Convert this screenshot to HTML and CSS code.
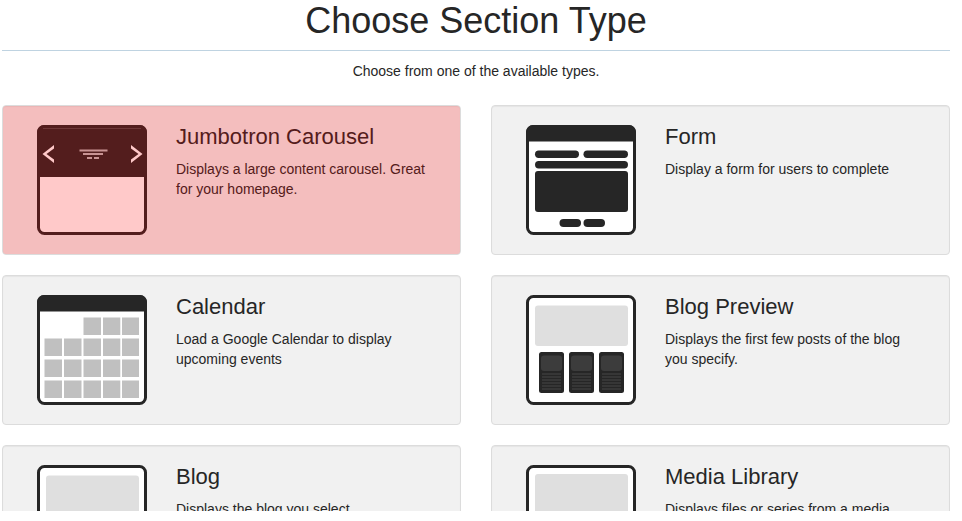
FILE: index.html
```html
<!DOCTYPE html>
<html lang="en">
<head>
  <meta charset="utf-8">
  <meta name="viewport" content="width=device-width, initial-scale=1.0">
  <title>Choose Section Type</title>
  <link rel="stylesheet" href="styles.css">
</head>
<body>
  <main class="chooser">
    <h1 class="title">Choose Section Type</h1>
    <p class="intro">Choose from one of the available types.</p>

    <div class="types">
      <a class="well selected" href="#jumbotron">
        <svg class="icon" viewBox="0 0 110 110" aria-hidden="true">
          <rect x="1.5" y="1.5" width="107" height="107" rx="6" fill="#fff" stroke="#262626" stroke-width="3"/>
          <path d="M0 52V7a7 7 0 0 1 7-7h96a7 7 0 0 1 7 7v45z" fill="#262626"/>
          <path d="M6 3.5h98" stroke="#484848"/>
          <path d="M17 20v3.500L9.500 29l7.500 5.500V38L5.500 29zM94 20v3.500l7.500 5.500-7.500 5.500V38l11.500-9z" fill="#fff"/>
          <path d="M42.5 25.500h28M46 29h20M50 33h5M57 33h5" stroke="#bbb" stroke-width="2"/>
        </svg>
        <div class="info">
          <h2>Jumbotron Carousel</h2>
          <p>Displays a large content carousel. Great for your homepage.</p>
        </div>
      </a>

      <a class="well" href="#form">
        <svg class="icon" viewBox="0 0 110 110" aria-hidden="true">
          <rect x="1.5" y="1.5" width="107" height="107" rx="6" fill="#fff" stroke="#262626" stroke-width="3"/>
          <g fill="#262626">
            <path d="M0 16.5V7a7 7 0 0 1 7-7h96a7 7 0 0 1 7 7v9.5z"/>
            <rect x="9" y="25.5" width="44" height="7.5" rx="3.7"/>
            <rect x="57.5" y="25.5" width="44.5" height="7.5" rx="3.7"/>
            <rect x="9" y="36" width="93" height="7.5" rx="3.7"/>
            <rect x="9" y="46" width="93" height="41" rx="3"/>
            <rect x="33.5" y="94" width="21.5" height="8" rx="4"/>
            <rect x="57.5" y="94" width="21.5" height="8" rx="4"/>
          </g>
        </svg>
        <div class="info">
          <h2>Form</h2>
          <p>Display a form for users to complete</p>
        </div>
      </a>

      <a class="well" href="#calendar">
        <svg class="icon" viewBox="0 0 110 110" aria-hidden="true">
          <rect x="1.5" y="1.5" width="107" height="107" rx="6" fill="#fff" stroke="#262626" stroke-width="3"/>
          <path d="M0 16.5V7a7 7 0 0 1 7-7h96a7 7 0 0 1 7 7v9.5z" fill="#262626"/>
          <g fill="#c0c0c0">
            <path d="M46.5 22.5H64V40H46.5zM66 22.5h17.3V40H66zM85 22.5h17V40H85z"/>
            <path d="M7.5 43.5H25V61H7.5zM27 43.5h17.5V61H27zM46.5 43.5H64V61H46.5zM66 43.5h17.3V61H66zM85 43.5h17V61H85z"/>
            <path d="M7.5 64.5H25V82H7.5zM27 64.5h17.5V82H27zM46.5 64.5H64V82H46.5zM66 64.5h17.3V82H66zM85 64.5h17V82H85z"/>
            <path d="M7.5 85.5H25V103H7.5zM27 85.5h17.5V103H27zM46.5 85.5H64V103H46.5zM66 85.5h17.3V103H66zM85 85.5h17V103H85z"/>
          </g>
        </svg>
        <div class="info">
          <h2>Calendar</h2>
          <p>Load a Google Calendar to display upcoming events</p>
        </div>
      </a>

      <a class="well" href="#blog-preview">
        <svg class="icon" viewBox="0 0 110 110" aria-hidden="true">
          <defs>
            <g id="post">
              <rect width="25" height="41" rx="2.5" fill="#262626"/>
              <rect x="2" y="3.5" width="21" height="15.5" rx="3" fill="#3c3c3c"/>
              <path d="M3 22h19M3 25h19M3 28h19M3 31h19M3 34h19M3 37h19" stroke="#3c3c3c" stroke-width="1.5"/>
            </g>
          </defs>
          <rect x="1.5" y="1.5" width="107" height="107" rx="6" fill="#fff" stroke="#262626" stroke-width="3"/>
          <rect x="9" y="10.5" width="93" height="40.5" rx="3" fill="#dfdfdf"/>
          <use href="#post" x="13" y="57"/>
          <use href="#post" x="43" y="57"/>
          <use href="#post" x="73" y="57"/>
        </svg>
        <div class="info">
          <h2>Blog Preview</h2>
          <p>Displays the first few posts of the blog you specify.</p>
        </div>
      </a>

      <a class="well" href="#blog">
        <svg class="icon" viewBox="0 0 110 110" aria-hidden="true">
          <rect x="1.5" y="1.5" width="107" height="107" rx="6" fill="#fff" stroke="#262626" stroke-width="3"/>
          <rect x="9" y="10.5" width="93" height="90" rx="3" fill="#dfdfdf"/>
        </svg>
        <div class="info">
          <h2>Blog</h2>
          <p>Displays the blog you select.</p>
        </div>
      </a>

      <a class="well" href="#media">
        <svg class="icon" viewBox="0 0 110 110" aria-hidden="true">
          <rect x="1.5" y="1.5" width="107" height="107" rx="6" fill="#fff" stroke="#262626" stroke-width="3"/>
          <rect x="9" y="9" width="93" height="91" rx="3" fill="#dfdfdf"/>
        </svg>
        <div class="info">
          <h2>Media Library</h2>
          <p>Displays files or series from a media</p>
        </div>
      </a>
    </div>
  </main>
</body>
</html>
```
FILE: styles.css
```css
* {
  box-sizing: border-box;
}
body {
  margin: 0;
  height: 100vh;
  padding-bottom: 10px;
  overflow: hidden;
  background: #fff;
  color: #262626;
  font-family: "Liberation Sans", Arial, sans-serif;
  font-size: 14px;
  line-height: 20px;
}
.chooser {
  height: 100%;
  padding: 0 12px 0 2px;
  overflow: hidden;
}
.title {
  margin: 0 0 10px;
  padding-bottom: 8px;
  border-bottom: 1px solid #bfd3e1;
  font-size: 36px;
  font-weight: 300;
  line-height: 42px;
  text-align: center;
}
.intro {
  margin: 0 0 24px;
  text-align: center;
}
.types {
  display: grid;
  grid-template-columns: 1fr 1fr;
  gap: 20px 30px;
}

/* section type cards */
.well {
  position: relative;
  display: flex;
  gap: 29px;
  min-height: 150px;
  padding: 19px 34px;
  background: #f1f1f1;
  border: 1px solid #dcdcdc;
  border-radius: 4px;
  box-shadow: inset 0 1px 1px rgba(0, 0, 0, 0.05);
  color: inherit;
  text-decoration: none;
}
.well.selected::after {
  content: "";
  position: absolute;
  inset: 0;
  border-radius: 3px;
  background: rgba(255, 0, 0, 0.21);
}
.icon {
  flex: none;
  width: 110px;
  height: 110px;
}
.info {
  flex: 1;
}
.info h2 {
  margin: 0 0 10px;
  font-size: 22px;
  font-weight: normal;
  line-height: 24px;
}
.info p {
  margin: 0;
}
```
